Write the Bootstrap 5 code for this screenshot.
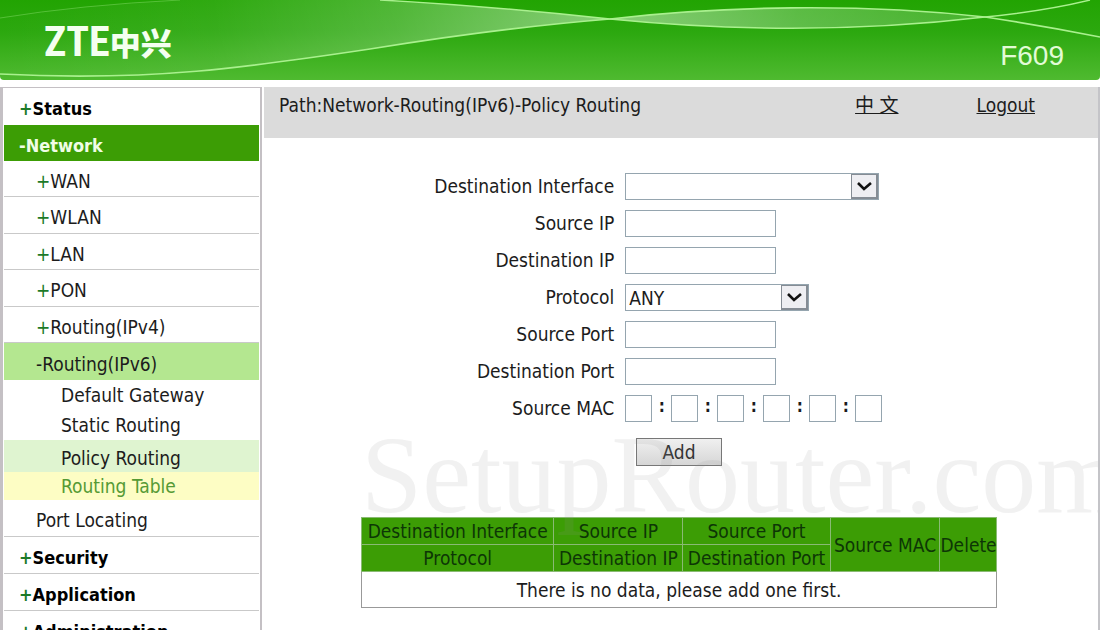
<!DOCTYPE html>
<html lang="en">
<head>
<meta charset="utf-8">
<meta name="viewport" content="width=device-width, initial-scale=1">
<title>F609 - Policy Routing</title>
<link href="https://cdn.jsdelivr.net/npm/bootstrap@5.3.0/dist/css/bootstrap.min.css" rel="stylesheet">
<style>
body{font-family:"DejaVu Sans Condensed","DejaVu Sans","Noto Sans CJK SC",sans-serif;font-size:19px;line-height:26px;color:#1c1c1c;background:#fff}
a{color:inherit}
.banner{height:80px;background:linear-gradient(#22a402,#2ca80f 40%,#4fba30);border-radius:0 0 4px 4px;overflow:hidden;margin-bottom:7px}
.swoosh{position:absolute;inset:0;width:100%;height:100%}
.brand-zte{font-family:"Roboto Condensed","Liberation Sans Narrow","Liberation Sans",sans-serif;font-weight:700;font-size:42px;line-height:48px;color:#f4fff0}
.brand-cjk{font-family:"Noto Sans CJK SC",sans-serif;font-weight:900;font-size:31px;line-height:48px;color:#f4fff0}
.model{font-family:"Liberation Sans",sans-serif;font-size:28px;line-height:32px;color:#e2fbd6}
.side{width:262px;border:solid #c4c0c4;border-width:1px 2px 0 3px;padding:0 1px;overflow-y:auto;scrollbar-width:none}
.side a{display:block;text-decoration:none;white-space:nowrap}
.side ul{list-style:none;margin:0;padding:0}
.top-link{height:37px;padding:8px 0 0 15px;border-bottom:1px solid #c9c9c9;font-size:18px;font-weight:700;line-height:26px;color:#000}
.top-link.open{height:36px;background:#3c9d05;color:#f0fde6;border:0}
.top-link.first{border:0}
.sub-link{height:36px;padding:7px 0 0 32px;border-bottom:1px solid #c9c9c9}
li:nth-child(even)>.sub-link,li:last-child>.sub-link{height:37px}
.sub-link.open{padding-top:8px;background:#b4e790;border:0}
.leaf{height:30px;padding:2px 0 0 57px}
.leaf.here{height:32px;padding-top:5px;background:#dff4d0}
.leaf.hover{height:28px;padding-top:1px;background:#fdfdc4;color:#559a35}
.sign{color:#1c7a28}
.panel{border-right:2px solid #c4c4c8;margin-left:2px}
.pathbar{background:#dbdbdb;height:51px;padding:5px 63px 0 15px}
.pathbar .lang{margin-right:78px}
.entry{padding-top:35px}
.field-row{display:grid;grid-template-columns:42% 1fr;column-gap:11px;margin-bottom:10px;height:27px}
.field-row label{text-align:right}
.box,.pick{border:1px solid #95a5af;border-radius:0;background-color:#fff;height:27px;padding:0 3px;color:#1c1c1c;font:inherit;line-height:24px}
.box{width:151px}
.mac{width:27px}
.colon{width:19px;text-align:center;line-height:22px;font-size:17px;font-weight:700}
.pick{appearance:none;background:#fff url("data:image/svg+xml,%3Csvg xmlns='http://www.w3.org/2000/svg' width='27' height='25'%3E%3Cpath fill='%23858c94' d='M0 0h27v25H0z'/%3E%3Cpath fill='%23eeeef2' d='M1 1h24v22H1z'/%3E%3Cpath fill='none' stroke='%23111' stroke-width='2.6' d='M7 9l6 6 7-6'/%3E%3C/svg%3E") no-repeat right center}
.pick.wide{width:254px}
.pick.mid{width:184px}
.actions{padding-top:6px}
.add-btn{width:86px;height:28px;padding:0;border:1px solid #777;border-radius:0;background:linear-gradient(#f0f0f0,#d6d6d6);font:inherit;line-height:26px;color:#333;margin-left:372px}
.rules{width:636px;max-width:100%;table-layout:fixed;border-collapse:collapse;border:1px solid #999;margin:51px auto 0;text-align:center;line-height:26px;white-space:nowrap}
.rules th{background:#3c9d05;border:1px solid #8aba74;font-weight:400;color:#0d3606;padding:0;height:27px}
.rules td{height:36px;padding:0}
.watermark{position:absolute;left:97px;bottom:78px;font:110px/110px "Liberation Serif",serif;color:rgba(150,150,150,.13);white-space:nowrap;pointer-events:none}
</style>
</head>
<body>
<div class="d-flex flex-column vh-100 overflow-hidden">
<header class="banner position-relative flex-shrink-0">
<svg class="swoosh" viewBox="0 0 1100 80" preserveAspectRatio="none" aria-hidden="true">
<defs>
<linearGradient id="g1"><stop offset="0" stop-color="#fff" stop-opacity="0"/><stop offset=".35" stop-color="#fff" stop-opacity=".06"/><stop offset=".65" stop-color="#fff" stop-opacity=".2"/><stop offset="1" stop-color="#fff" stop-opacity=".45"/></linearGradient>
<linearGradient id="g2"><stop offset="0" stop-color="#fff" stop-opacity=".45"/><stop offset=".5" stop-color="#fff" stop-opacity=".25"/><stop offset="1" stop-color="#fff" stop-opacity=".15"/></linearGradient>
</defs>
<path fill="url(#g1)" d="M0 18Q80 5 180 0H380Q490 6 610 19Q500 28 370 49C250 67 150 82 0 74Z"/>
<path fill="url(#g2)" d="M610 19C720 6 860 3 985 17C850 33 720 30 610 19Z"/>
<g fill="none" stroke="#a9f08e">
<path stroke-width="1.6" d="M0 74C150 82 250 67 370 49Q500 28 610 19C720 6 860 3 985 17Q1045 26 1100 37"/>
<path stroke-width="1.4" d="M380 0Q490 6 610 19C720 30 850 33 985 17Q1045 11 1090 0"/>
<path opacity=".35" d="M0 18Q80 5 180 0"/>
</g>
</svg>
<div class="position-relative d-flex h-100">
<div class="d-flex align-items-center ps-4 pt-1"><span class="brand-zte ps-3 ms-1">ZTE</span><span class="brand-cjk">中兴</span></div>
<div class="model ms-auto align-self-end pe-4 mb-2"><span class="pe-2 me-1">F609</span></div>
</div>
</header>
<div class="d-flex flex-fill overflow-hidden">
<nav class="side flex-shrink-0" aria-label="Main menu">
<ul>
<li><a class="top-link first" href="#"><span class="sign">+</span>Status</a></li>
<li><a class="top-link open" href="#">-Network</a>
<ul>
<li><a class="sub-link" href="#"><span class="sign">+</span>WAN</a></li>
<li><a class="sub-link" href="#"><span class="sign">+</span>WLAN</a></li>
<li><a class="sub-link" href="#"><span class="sign">+</span>LAN</a></li>
<li><a class="sub-link" href="#"><span class="sign">+</span>PON</a></li>
<li><a class="sub-link" href="#"><span class="sign">+</span>Routing(IPv4)</a></li>
<li><a class="sub-link open" href="#">-Routing(IPv6)</a>
<ul>
<li><a class="leaf" href="#">Default Gateway</a></li>
<li><a class="leaf" href="#">Static Routing</a></li>
<li><a class="leaf here" href="#">Policy Routing</a></li>
<li><a class="leaf hover" href="#">Routing Table</a></li>
</ul></li>
<li><a class="sub-link" href="#">Port Locating</a></li>
</ul></li>
<li><a class="top-link" href="#"><span class="sign">+</span>Security</a></li>
<li><a class="top-link" href="#"><span class="sign">+</span>Application</a></li>
<li><a class="top-link" href="#"><span class="sign">+</span>Administration</a></li>
</ul>
</nav>
<main class="panel flex-fill position-relative overflow-hidden">
<div class="pathbar d-flex">
<span>Path:Network-Routing(IPv6)-Policy Routing</span>
<a class="lang ms-auto" href="#">中 文</a><a href="#">Logout</a>
</div>
<form class="entry position-relative">
<div class="field-row"><label for="dif">Destination Interface</label><div><select id="dif" class="pick wide"><option></option></select></div></div>
<div class="field-row"><label for="sip">Source IP</label><div><input id="sip" class="box" type="text"></div></div>
<div class="field-row"><label for="dip">Destination IP</label><div><input id="dip" class="box" type="text"></div></div>
<div class="field-row"><label for="pro">Protocol</label><div><select id="pro" class="pick mid"><option>ANY</option></select></div></div>
<div class="field-row"><label for="spo">Source Port</label><div><input id="spo" class="box" type="text"></div></div>
<div class="field-row"><label for="dpo">Destination Port</label><div><input id="dpo" class="box" type="text"></div></div>
<div class="field-row"><label for="mac1">Source MAC</label><div class="d-flex"><input id="mac1" class="box mac" type="text"><span class="colon">:</span><input aria-label="MAC 2" class="box mac" type="text"><span class="colon">:</span><input aria-label="MAC 3" class="box mac" type="text"><span class="colon">:</span><input aria-label="MAC 4" class="box mac" type="text"><span class="colon">:</span><input aria-label="MAC 5" class="box mac" type="text"><span class="colon">:</span><input aria-label="MAC 6" class="box mac" type="text"></div></div>
<div class="actions"><button type="button" class="add-btn d-block">Add</button></div>
<div class="pe-1">
<table class="rules">
<colgroup><col style="width:30.3%"><col style="width:20.3%"><col style="width:23.2%"><col style="width:17.3%"><col style="width:8.9%"></colgroup>
<thead>
<tr><th>Destination Interface</th><th>Source IP</th><th>Source Port</th><th rowspan="2">Source MAC</th><th rowspan="2">Delete</th></tr>
<tr><th>Protocol</th><th>Destination IP</th><th>Destination Port</th></tr>
</thead>
<tbody><tr><td colspan="5">There is no data, please add one first.</td></tr></tbody>
</table>
</div>
<div class="watermark" aria-hidden="true">SetupRouter.com</div>
</form>
</main>
</div>
</div>
<script src="https://cdn.jsdelivr.net/npm/bootstrap@5.3.0/dist/js/bootstrap.bundle.min.js"></script>
</body>
</html>
